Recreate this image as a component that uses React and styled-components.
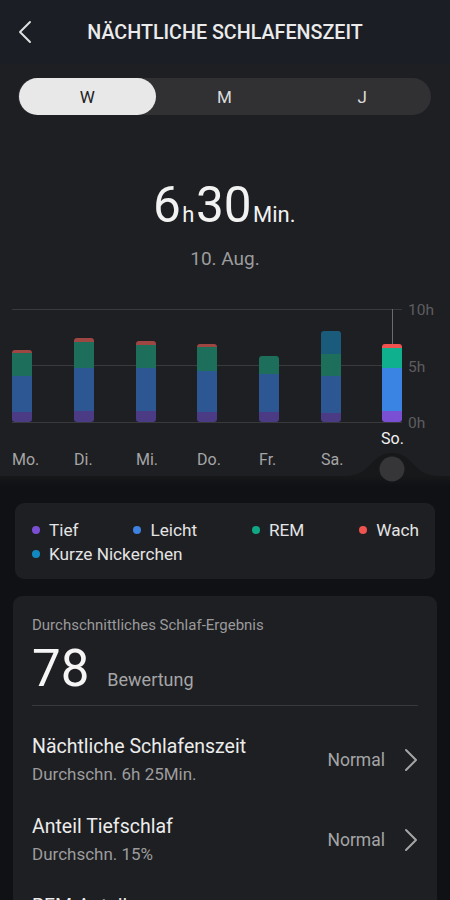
import React from "react";
import styled, { createGlobalStyle } from "styled-components";

const GlobalStyle = createGlobalStyle`
  html, body {
    margin: 0;
    padding: 0;
    background: #101114;
  }
  body {
    font-family: Roboto, "Noto Sans", "Liberation Sans", sans-serif;
    -webkit-font-smoothing: antialiased;
  }
`;

const COLORS = {
  tief: ["#4a3b84", "#7b4fd3"],
  leicht: ["#2d5793", "#3a84e4"],
  rem: ["#1d6e5b", "#0fb08e"],
  wach: ["#9e4642", "#f1524f"],
  nap: ["#1a5a7a", "#1288c0"],
};

// segments top -> bottom, y in chart coords (0h line at 122)
const DAYS = [
  { label: "Mo.", x: 12, segs: [["wach", 50, 53], ["rem", 53, 76], ["leicht", 76, 112], ["tief", 112, 122]] },
  { label: "Di.", x: 74, segs: [["wach", 38, 42], ["rem", 42, 68], ["leicht", 68, 111], ["tief", 111, 122]] },
  { label: "Mi.", x: 136, segs: [["wach", 41, 45], ["rem", 45, 68], ["leicht", 68, 111], ["tief", 111, 122]] },
  { label: "Do.", x: 197, segs: [["wach", 44, 47], ["rem", 47, 71], ["leicht", 71, 112], ["tief", 112, 122]] },
  { label: "Fr.", x: 259, segs: [["rem", 56, 74], ["leicht", 74, 112], ["tief", 112, 122]] },
  { label: "Sa.", x: 321, segs: [["nap", 31, 54], ["rem", 54, 76], ["leicht", 76, 113], ["tief", 113, 122]] },
  { label: "So.", x: 382, active: true, segs: [["wach", 44, 48], ["rem", 48, 68], ["leicht", 68, 111], ["tief", 111, 122]] },
];

const LEGEND = [
  ["Tief", "#7b4fd3"],
  ["Leicht", "#3d82e0"],
  ["REM", "#10a884"],
  ["Wach", "#ef5350"],
  ["Kurze Nickerchen", "#1288c0"],
];

const METRICS = [
  { title: "Nächtliche Schlafenszeit", sub: "Durchschn. 6h 25Min.", status: "Normal" },
  { title: "Anteil Tiefschlaf", sub: "Durchschn. 15%", status: "Normal" },
  { title: "REM-Anteil", sub: "Durchschn. 21%", status: "Normal" },
];

const Page = styled.div`
  width: 450px;
  height: 900px;
  overflow: hidden;
  background: #101114;
`;

const Header = styled.header`
  height: 64px;
  background: #1b1e25;
  display: flex;
  align-items: center;
  justify-content: center;
  position: relative;
`;

const BackButton = styled.div`
  position: absolute;
  left: 18px;
  top: 20px;
  width: 16px;
  height: 24px;
  display: flex;
`;

const Title = styled.h1`
  margin: 0;
  font-size: 19.7px;
  font-weight: 500;
  color: #ebebeb;
  line-height: 24px;
  padding-top: 1px;
`;

const Top = styled.section`
  background: #1e1f22;
  padding-top: 14px;
`;

const Segmented = styled.div`
  margin: 0 19px 0 18px;
  height: 37px;
  border-radius: 19px;
  background: #313134;
  display: grid;
  grid-template-columns: repeat(3, 1fr);
`;

const Segment = styled.div`
  display: flex;
  align-items: center;
  justify-content: center;
  border-radius: 19px;
  font-size: 17px;
  background: ${(p) => (p.$active ? "#e8e8e8" : "transparent")};
  color: ${(p) => (p.$active ? "#222" : "#dcdcdc")};
  margin-left: ${(p) => (p.$active ? "1px" : "0")};
`;

const Duration = styled.div`
  margin-top: 62px;
  text-align: center;
  font-size: 49.5px;
  line-height: 56px;
  color: #f2f2f2;
`;

const Unit = styled.span`
  font-size: 22px;
  line-height: 1;
  margin: 0 1.5px;
`;

const DateText = styled.div`
  margin-top: 14px;
  text-align: center;
  font-size: 19px;
  line-height: 24px;
  color: #9c9c9e;
`;

const ChartSvg = styled.svg`
  display: block;
  margin-top: 29px;
`;

const Lower = styled.section`
  padding: 17px 0 0;
  display: flex;
  flex-direction: column;
`;

const LegendCard = styled.div`
  margin: 0 15px;
  background: #1e1f22;
  border-radius: 9px;
  padding: 15px 16px 13px 17px;
  display: flex;
  flex-wrap: wrap;
  justify-content: space-between;
  column-gap: 24px;
`;

const LegendItem = styled.div`
  display: flex;
  align-items: center;
  gap: 9px;
  font-size: 17.2px;
  line-height: 24px;
  color: #e4e4e4;
`;

const Dot = styled.span`
  width: 8px;
  height: 8px;
  border-radius: 50%;
  background: ${(p) => p.$color};
  margin-top: -1px;
`;

const ScoreCard = styled.div`
  margin: 17px 13px 0;
  background: #1e1f22;
  border-radius: 9px;
  padding: 19px 19px 0;
`;

const CardLabel = styled.div`
  font-size: 15px;
  line-height: 20px;
  color: #9a9a9c;
`;

const ScoreRow = styled.div`
  margin-top: 6px;
  display: flex;
  align-items: baseline;
  gap: 18px;
  padding-bottom: 8px;
  border-bottom: 1px solid #38383b;
  margin-bottom: 14px;
`;

const ScoreValue = styled.span`
  font-size: 51px;
  line-height: 56px;
  color: #f5f5f5;
`;

const ScoreUnit = styled.span`
  font-size: 18px;
  color: #a5a5a7;
`;

const MetricRow = styled.div`
  height: 80px;
  display: flex;
  align-items: center;
  justify-content: space-between;
`;

const MetricText = styled.div`
  display: flex;
  flex-direction: column;
  gap: 4px;
`;

const MetricTitle = styled.div`
  font-size: 19.5px;
  line-height: 24px;
  color: #ececec;
`;

const MetricSub = styled.div`
  font-size: 17px;
  line-height: 22px;
  color: #9c9c9e;
`;

const MetricStatus = styled.div`
  display: flex;
  align-items: center;
  gap: 19px;
  font-size: 17.5px;
  line-height: 22px;
  color: #a5a5a7;
`;

function Chevron({ dir = "right", color, w = 14, h = 24, sw = 2 }) {
  const d = dir === "left" ? `M${w - 2} 2 L2 ${h / 2} L${w - 2} ${h - 2}` : `M2 2 L${w - 2} ${h / 2} L2 ${h - 2}`;
  return (
    <svg width={w} height={h} viewBox={`0 0 ${w} ${h}`}>
      <path d={d} fill="none" stroke={color} strokeWidth={sw} strokeLinecap="round" strokeLinejoin="round" />
    </svg>
  );
}

function Chart() {
  return (
    <ChartSvg width="450" height="186" viewBox="0 0 450 186">
      <defs>
        {DAYS.map((d, i) => (
          <clipPath id={`bar${i}`} key={i}>
            <rect x={d.x} y={d.segs[0][1]} width="20" height={122 - d.segs[0][1]} rx="3" />
          </clipPath>
        ))}
        <linearGradient id="band" x1="0" y1="0" x2="0" y2="1">
          <stop offset="0" stopColor="#17181a" />
          <stop offset="1" stopColor="#101114" />
        </linearGradient>
      </defs>
      {[9, 65, 122].map((y) => (
        <line key={y} x1="12" x2="402" y1={y + 0.5} y2={y + 0.5} stroke="#3a3a3d" strokeWidth="1" />
      ))}
      <line x1="392.5" x2="392.5" y1="9" y2="44" stroke="#6b6b6e" strokeWidth="1" />
      <g fontSize="15.5" fill="#5d5d60">
        <text x="408" y="15">10h</text>
        <text x="408" y="72">5h</text>
        <text x="408" y="128">0h</text>
      </g>
      {DAYS.map((d, i) => (
        <g key={d.label} clipPath={`url(#bar${i})`}>
          {d.segs.map(([k, y1, y2]) => (
            <rect key={k} x={d.x} y={y1} width="20" height={y2 - y1} fill={COLORS[k][d.active ? 1 : 0]} />
          ))}
        </g>
      ))}
      {DAYS.map((d) => (
        <text
          key={d.label}
          x={d.active ? d.x - 1 : d.x}
          y={d.active ? 144 : 165}
          fontSize="16"
          fill={d.active ? "#f2f2f2" : "#a5a5a7"}
        >
          {d.label}
        </text>
      ))}
      <rect x="0" y="176" width="450" height="10" fill="url(#band)" />
      <path d="M345 176 C372 176 370 153 392 153 C414 153 412 176 440 176 Z" fill="#17181a" />
      <circle cx="392" cy="169" r="12.5" fill="#363639" />
    </ChartSvg>
  );
}

export default function App() {
  return (
    <Page>
      <GlobalStyle />
      <Header>
        <BackButton>
          <Chevron dir="left" color="#dedede" w={14} h={24} sw={2} />
        </BackButton>
        <Title>NÄCHTLICHE SCHLAFENSZEIT</Title>
      </Header>
      <Top>
        <Segmented>
          <Segment $active>W</Segment>
          <Segment>M</Segment>
          <Segment>J</Segment>
        </Segmented>
        <Duration>
          6<Unit>h</Unit>30<Unit>Min.</Unit>
        </Duration>
        <DateText>10. Aug.</DateText>
        <Chart />
      </Top>
      <Lower>
        <LegendCard>
          {LEGEND.map(([name, color]) => (
            <LegendItem key={name}>
              <Dot $color={color} />
              {name}
            </LegendItem>
          ))}
        </LegendCard>
        <ScoreCard>
          <CardLabel>Durchschnittliches Schlaf-Ergebnis</CardLabel>
          <ScoreRow>
            <ScoreValue>78</ScoreValue>
            <ScoreUnit>Bewertung</ScoreUnit>
          </ScoreRow>
          {METRICS.map((m) => (
            <MetricRow key={m.title}>
              <MetricText>
                <MetricTitle>{m.title}</MetricTitle>
                <MetricSub>{m.sub}</MetricSub>
              </MetricText>
              <MetricStatus>
                {m.status}
                <Chevron color="#a5a5a7" w={14} h={24} sw={2} />
              </MetricStatus>
            </MetricRow>
          ))}
        </ScoreCard>
      </Lower>
    </Page>
  );
}
